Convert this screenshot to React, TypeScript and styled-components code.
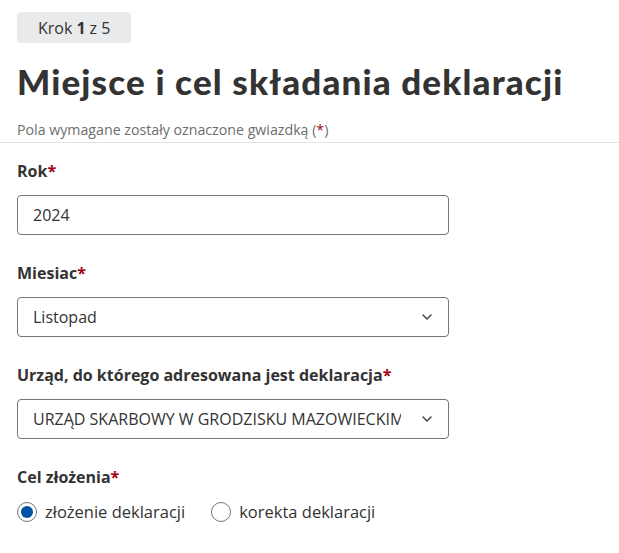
import React from "react";
import styled, { createGlobalStyle } from "styled-components";

const Global = createGlobalStyle`
  html, body { margin: 0; padding: 0; background: #fff; }
  body { font-family: "Open Sans", "Noto Sans", sans-serif; color: #333; }
  * { box-sizing: border-box; }
`;

const Page = styled.div`
  display: flex;
  flex-direction: column;
  padding-top: 12px;
`;

const Head = styled.div`
  display: flex;
  flex-direction: column;
  align-items: flex-start;
  padding: 0 17px;
`;

const StepBadge = styled.div`
  display: flex;
  align-items: center;
  height: 31px;
  padding: 0 21px;
  background: #e9eaec;
  border-radius: 4px;
  font-size: 16px;
  color: #333;
  b { font-weight: 700; margin: 0 4px; }
`;

const Title = styled.h1`
  margin: 18px 0 0;
  font-family: "Lato", sans-serif;
  font-weight: 900;
  font-size: 35px;
  line-height: 40px;
  letter-spacing: 1.15px;
  color: #333;
  white-space: nowrap;
`;

const Hint = styled.p`
  margin: 20px 0 0;
  font-size: 14.2px;
  line-height: 18px;
  color: #6e6e6e;
`;

const Star = styled.span`
  color: #a50014;
`;

const Divider = styled.hr`
  margin: 3px 0 0;
  border: 0;
  border-top: 1px solid #e3e3e3;
  width: 100%;
`;

const Form = styled.div`
  display: flex;
  flex-direction: column;
  padding: 17px 17px 0;
  gap: 27px;
`;

const Field = styled.div`
  display: flex;
  flex-direction: column;
  gap: 13px;
  width: 432px;
`;

const Label = styled.label`
  font-size: 16px;
  font-weight: 700;
  line-height: 22px;
  color: #333;
`;

const Box = styled.div`
  display: flex;
  align-items: center;
  height: 40px;
  border: 1px solid #767676;
  border-radius: 4px;
  padding: 0 15px;
  font-size: 16px;
  color: #333;
  white-space: nowrap;
  overflow: hidden;
`;

const BoxText = styled.span`
  flex: 1;
  overflow: hidden;
  min-width: 0;
`;

const Chevron = styled.svg`
  flex: none;
  width: 12px;
  height: 8px;
  margin-left: 20px;
`;

const Radios = styled.div`
  display: flex;
  gap: 26px;
  margin-top: -1px;
`;

const RadioItem = styled.label`
  display: flex;
  align-items: center;
  gap: 8px;
  font-size: 16.5px;
  color: #333;
`;

const RadioCircle = styled.span<{ $checked?: boolean }>`
  width: 20px;
  height: 20px;
  border-radius: 50%;
  border: 1px solid #767676;
  display: flex;
  align-items: center;
  justify-content: center;
  &::after {
    content: "";
    width: 12px;
    height: 12px;
    border-radius: 50%;
    background: ${(p) => (p.$checked ? "#0052a5" : "transparent")};
  }
`;

const ChevronIcon = () => (
  <Chevron viewBox="0 0 12 8" fill="none">
    <path d="M2 2 L6 6 L10 2" stroke="#444" strokeWidth="1.5" strokeLinecap="round" strokeLinejoin="round" />
  </Chevron>
);

export default function App() {
  return (
    <Page>
      <Global />
      <Head>
        <StepBadge>
          Krok <b>1</b> z 5
        </StepBadge>
        <Title>Miejsce i cel składania deklaracji</Title>
        <Hint>
          Pola wymagane zostały oznaczone gwiazdką (<Star>*</Star>)
        </Hint>
      </Head>
      <Divider />
      <Form>
        <Field>
          <Label>
            Rok<Star>*</Star>
          </Label>
          <Box>
            <BoxText>2024</BoxText>
          </Box>
        </Field>
        <Field>
          <Label>
            Miesiac<Star>*</Star>
          </Label>
          <Box>
            <BoxText>Listopad</BoxText>
            <ChevronIcon />
          </Box>
        </Field>
        <Field>
          <Label>
            Urząd, do którego adresowana jest deklaracja<Star>*</Star>
          </Label>
          <Box>
            <BoxText>URZĄD SKARBOWY W GRODZISKU MAZOWIECKIM</BoxText>
            <ChevronIcon />
          </Box>
        </Field>
        <Field>
          <Label>
            Cel złożenia<Star>*</Star>
          </Label>
          <Radios>
            <RadioItem>
              <RadioCircle $checked />
              złożenie deklaracji
            </RadioItem>
            <RadioItem>
              <RadioCircle />
              korekta deklaracji
            </RadioItem>
          </Radios>
        </Field>
      </Form>
    </Page>
  );
}
